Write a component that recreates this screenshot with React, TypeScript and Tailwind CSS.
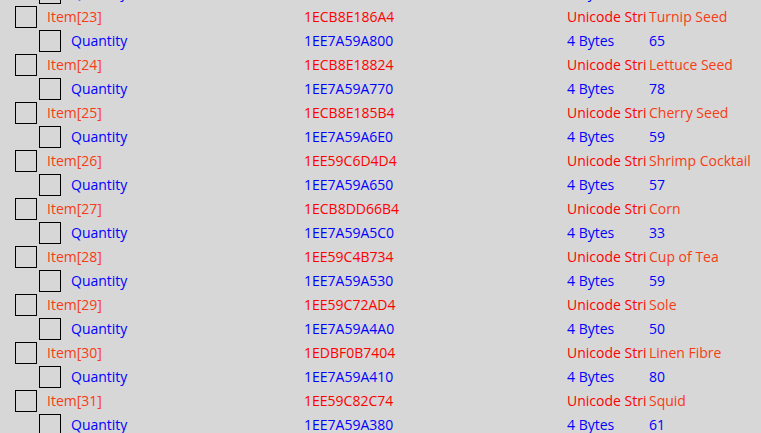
import React from "react";

type Item = { idx: number; addr: string; name: string; qaddr: string; qty: string };

const items: Item[] = [
  { idx: 23, addr: "1ECB8E186A4", name: "Turnip Seed", qaddr: "1EE7A59A800", qty: "65" },
  { idx: 24, addr: "1ECB8E18824", name: "Lettuce Seed", qaddr: "1EE7A59A770", qty: "78" },
  { idx: 25, addr: "1ECB8E185B4", name: "Cherry Seed", qaddr: "1EE7A59A6E0", qty: "59" },
  { idx: 26, addr: "1EE59C6D4D4", name: "Shrimp Cocktail", qaddr: "1EE7A59A650", qty: "57" },
  { idx: 27, addr: "1ECB8DD66B4", name: "Corn", qaddr: "1EE7A59A5C0", qty: "33" },
  { idx: 28, addr: "1EE59C4B734", name: "Cup of Tea", qaddr: "1EE7A59A530", qty: "59" },
  { idx: 29, addr: "1EE59C72AD4", name: "Sole", qaddr: "1EE7A59A4A0", qty: "50" },
  { idx: 30, addr: "1EDBF0B7404", name: "Linen Fibre", qaddr: "1EE7A59A410", qty: "80" },
  { idx: 31, addr: "1EE59C82C74", name: "Squid", qaddr: "1EE7A59A380", qty: "61" },
];

function Box() {
  return <div className="w-[22px] h-[22px] border border-black shrink-0" />;
}

function ItemRow({ it }: { it: Item }) {
  return (
    <div className="flex h-[24px] items-center leading-[24px] whitespace-nowrap">
      <div className="w-[304px] flex items-center shrink-0 pl-[15px]">
        <Box />
        <span className="ml-[10px] text-[#f83c14]">Item[{it.idx}]</span>
      </div>
      <div className="w-[263px] shrink-0 text-[#ff0000]">{it.addr}</div>
      <div className="w-[82px] shrink-0">
        <div className="w-[80px] overflow-hidden text-[#ff0000]">Unicode String</div>
      </div>
      <div className="text-[#f83c14]">{it.name}</div>
    </div>
  );
}

function QtyRow({ addr, qty }: { addr: string; qty: string }) {
  return (
    <div className="flex h-[24px] items-center leading-[24px] whitespace-nowrap">
      <div className="w-[304px] flex items-center shrink-0 pl-[39px]">
        <Box />
        <span className="ml-[10px] text-[#0000ff]">Quantity</span>
      </div>
      <div className="w-[263px] shrink-0 text-[#0000ff]">{addr}</div>
      <div className="w-[82px] shrink-0 text-[#0000ff]">4 Bytes</div>
      <div className="text-[#0000ff]">{qty}</div>
    </div>
  );
}

export default function App() {
  return (
    <div className="w-[761px] h-[433px] overflow-hidden bg-[#d7d7d7] font-['Open_Sans',sans-serif] text-[14px]">
      <div className="mt-[-19px] flex flex-col">
        <QtyRow addr="1EE7A59A890" qty="62" />
        {items.map((it) => (
          <React.Fragment key={it.idx}>
            <ItemRow it={it} />
            <QtyRow addr={it.qaddr} qty={it.qty} />
          </React.Fragment>
        ))}
      </div>
    </div>
  );
}
